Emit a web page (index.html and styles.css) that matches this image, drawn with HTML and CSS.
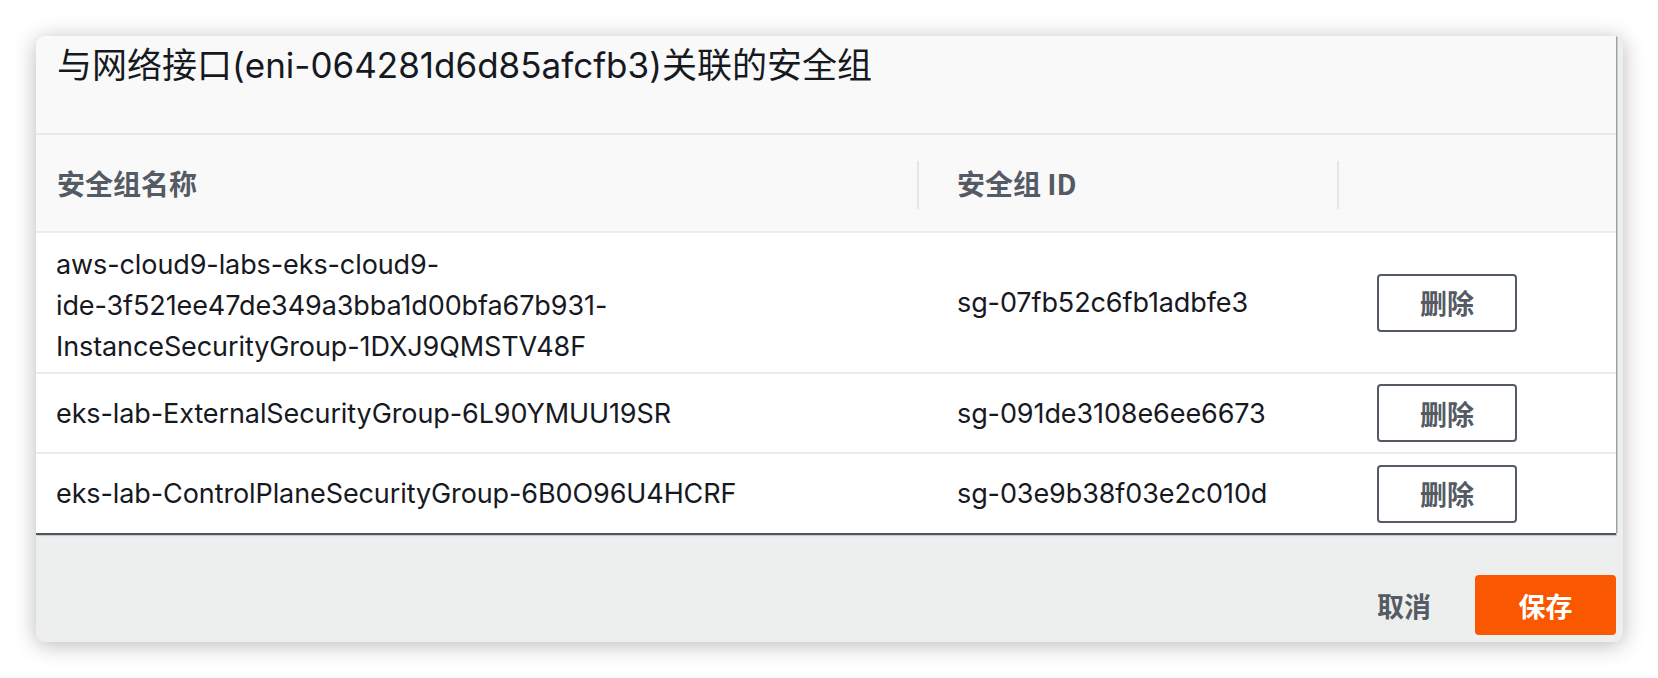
FILE: index.html
```html
<!DOCTYPE html>
<html lang="zh-CN">
<head>
<meta charset="utf-8">
<title>安全组</title>
<link rel="stylesheet" href="styles.css">
</head>
<body>
<div class="dialog">
  <div class="dialog-body">
    <div class="dialog-title">与网络接口(eni-064281d6d85afcfb3)关联的安全组</div>
    <div class="table">
      <div class="row head">
        <div class="cell c1">安全组名称</div>
        <div class="cell c2"><span class="divider"></span>安全组 ID</div>
        <div class="cell c3"><span class="divider"></span></div>
      </div>
      <div class="row first">
        <div class="cell c1">aws-cloud9-labs-eks-cloud9-<br>ide-3f521ee47de349a3bba1d00bfa67b931-<br>InstanceSecurityGroup-1DXJ9QMSTV48F</div>
        <div class="cell c2">sg-07fb52c6fb1adbfe3</div>
        <div class="cell c3"><button class="btn-outline">删除</button></div>
      </div>
      <div class="row">
        <div class="cell c1">eks-lab-ExternalSecurityGroup-6L90YMUU19SR</div>
        <div class="cell c2">sg-091de3108e6ee6673</div>
        <div class="cell c3"><button class="btn-outline">删除</button></div>
      </div>
      <div class="row last">
        <div class="cell c1">eks-lab-ControlPlaneSecurityGroup-6B0O96U4HCRF</div>
        <div class="cell c2">sg-03e9b38f03e2c010d</div>
        <div class="cell c3"><button class="btn-outline">删除</button></div>
      </div>
    </div>
  </div>
  <div class="dialog-footer">
    <button class="btn-link">取消</button>
    <button class="btn-primary">保存</button>
  </div>
</div>
</body>
</html>
```
FILE: styles.css
```css
html, body {
  margin: 0;
  padding: 0;
  background: #ffffff;
}
body {
  font-family: Inter, "Noto Sans CJK SC", sans-serif;
  color: #16191f;
  width: 1658px;
  height: 678px;
  overflow: hidden;
}
.dialog {
  margin: 36px 0 0 36px;
  width: 1587px;
  height: 606px;
  background: #edefef;
  border-radius: 9px;
  box-shadow: 0 3px 22px rgba(0, 0, 0, 0.28);
  display: flex;
  flex-direction: column;
  overflow: hidden;
}
.dialog-body {
  width: 1580px;
  height: 497px;
  background: #ffffff;
  box-shadow: 1px 0 0 #9aa1a5, 2px 0 0 #c9cdcf, 0 2px 0 #4b5660, 1px 3px 1px rgba(0,0,0,0.18);
  border-top-left-radius: 9px;
  display: flex;
  flex-direction: column;
}
.dialog-title {
  background: #f9f9f9;
  height: 98px;
  border-bottom: 2px solid #e6e9e9;
  box-sizing: content-box;
  padding-left: 21px;
  font-size: 35px;
  line-height: 58px;
  color: #16191f;
  font-family: Inter, "Noto Sans CJK SC", sans-serif;
}
.table {
  display: flex;
  flex-direction: column;
}
.row {
  display: grid;
  grid-template-columns: 881px 420px 279px;
  border-bottom: 2px solid #eaeded;
  font-size: 27px;
  line-height: 41px;
  letter-spacing: -0.1px;
}
.row.last {
  border-bottom: none;
  height: 79px;
}
.row.head {
  height: 96px;
  background: #f9f9f9;
  font-weight: 700;
  color: #545b64;
  font-size: 28px;
  letter-spacing: 0;
  font-family: "Noto Sans CJK SC", sans-serif;
}
.cell {
  display: flex;
  align-items: center;
  padding: 8px 0;
  position: relative;
}
.row.first .c1 {
  padding: 11px 0 5px 20px;
}
.c1 {
  padding-left: 20px;
  display: block;
  align-self: center;
}
.row.head .c1 {
  display: flex;
  align-self: stretch;
  padding-left: 21px;
}
.c2, .c3 {
  padding-left: 40px;
}
.divider {
  position: absolute;
  left: 0;
  top: 26px;
  width: 2px;
  height: 48px;
  background: #e4e7e8;
}
.btn-outline {
  width: 140px;
  height: 58px;
  border: 2px solid #545b64;
  border-radius: 4px;
  background: #ffffff;
  color: #545b64;
  font-family: "Noto Sans CJK SC", sans-serif;
  font-weight: 700;
  font-size: 27px;
  padding: 0;
  margin: 2px 0;
}
.dialog-footer {
  flex: 1;
  display: flex;
  justify-content: flex-end;
  align-items: flex-end;
  gap: 44px;
  padding: 0 7px 7px 0;
}
.btn-link {
  background: transparent;
  border: none;
  padding: 0;
  height: 60px;
  color: #545b64;
  font-family: "Noto Sans CJK SC", sans-serif;
  font-weight: 700;
  font-size: 27px;
}
.btn-primary {
  width: 141px;
  height: 60px;
  border: none;
  border-radius: 4px;
  background: #fa5800;
  color: #ffffff;
  font-family: "Noto Sans CJK SC", sans-serif;
  font-weight: 700;
  font-size: 27px;
  padding: 0;
}
```
